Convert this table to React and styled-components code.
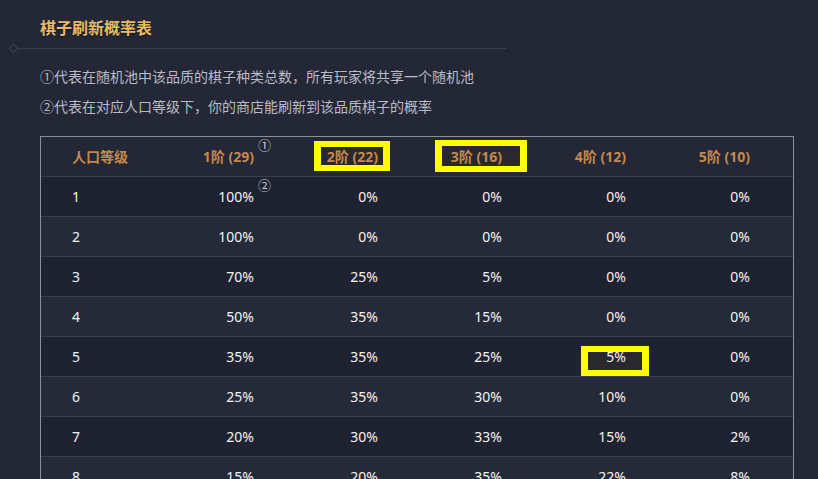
import React from "react";
import styled, { createGlobalStyle } from "styled-components";

const GlobalStyle = createGlobalStyle`
	body {
		margin: 0;
		background: #232736;
		font-family: "Noto Sans", "Noto Sans CJK SC", sans-serif;
	}
`;

const headers = [
	{ label: "1阶 (29)", sup: "①" },
	{ label: "2阶 (22)", mark: { l: -13, r: -12, t: -6, b: -5 } },
	{ label: "3阶 (16)", mark: { l: -16, r: -25, t: -7, b: -6 } },
	{ label: "4阶 (12)" },
	{ label: "5阶 (10)" },
];

const rows = [
	["1", "100%", "0%", "0%", "0%", "0%"],
	["2", "100%", "0%", "0%", "0%", "0%"],
	["3", "70%", "25%", "5%", "0%", "0%"],
	["4", "50%", "35%", "15%", "0%", "0%"],
	["5", "35%", "35%", "25%", "5%", "0%"],
	["6", "25%", "35%", "30%", "10%", "0%"],
	["7", "20%", "30%", "33%", "15%", "2%"],
	["8", "15%", "20%", "35%", "22%", "8%"],
];

function App() {
	return (
		<Page>
			<GlobalStyle />
			<Title>棋子刷新概率表</Title>
			<TitleLine>
				<Diamond />
			</TitleLine>
			<Notes>
				<p>①代表在随机池中该品质的棋子种类总数，所有玩家将共享一个随机池</p>
				<p>②代表在对应人口等级下，你的商店能刷新到该品质棋子的概率</p>
			</Notes>
			<Table>
				<HeadRow>
					<FirstCell head>人口等级</FirstCell>
					{headers.map((h) => (
						<Cell head key={h.label}>
							{h.mark ? (
								<Mark box={h.mark}>{h.label}</Mark>
							) : (
								<Tag>
									{h.label}
									{h.sup && <Sup>{h.sup}</Sup>}
								</Tag>
							)}
						</Cell>
					))}
				</HeadRow>
				{rows.map((r, i) => (
					<Row key={r[0]} dark={i % 2 === 0}>
						<FirstCell>{r[0]}</FirstCell>
						{r.slice(1).map((v, j) => (
							<Cell key={j}>
								{i === 0 && j === 0 ? (
									<Tag>
										{v}
										<Sup>②</Sup>
									</Tag>
								) : i === 4 && j === 3 ? (
									<Mark box={{ l: -25, r: -23, t: -1, b: -10 }}>{v}</Mark>
								) : (
									v
								)}
							</Cell>
						))}
					</Row>
				))}
			</Table>
		</Page>
	);
}

export default App;

const Page = styled.div`
	padding: 16px 25px 0 40px;
	height: 479px;
	box-sizing: border-box;
	overflow: hidden;
`;

const Title = styled.h2`
	margin: 0;
	font-size: 16px;
	line-height: 24px;
	font-weight: bold;
	color: #e6bb68;
	text-shadow: 0 1px 1px rgba(0, 0, 0, 0.5);
`;

const TitleLine = styled.div`
	position: relative;
	margin: 8px 0 0 -30px;
	width: 496px;
	height: 1px;
	background: #3a3f4f;
`;

const Diamond = styled.span`
	position: absolute;
	left: 0;
	top: -3px;
	width: 5px;
	height: 5px;
	border: 1px solid #3f4556;
	transform: rotate(45deg);
	background: #232736;
`;

const Notes = styled.div`
	margin-top: 13px;
	color: #b9bcc6;
	font-size: 14px;
	line-height: 30px;

	p {
		margin: 0;
	}
`;

const Table = styled.div`
	margin-top: 14px;
	width: 754px;
	border: 1px solid #8c909c;
	border-bottom: none;
	box-sizing: border-box;
`;

const HeadRow = styled.div`
	display: grid;
	grid-template-columns: 89px repeat(5, 124px);
	height: 40px;
	align-items: center;
	border-bottom: 1px solid #3a3f4d;
	box-sizing: border-box;
`;

const Row = styled(HeadRow)`
	background: ${(p) => (p.dark ? "#1f2230" : "#252a38")};
`;

const Cell = styled.div`
	text-align: right;
	font-size: 14px;
	line-height: 20px;
	color: ${(p) => (p.head ? "#c4894c" : "#f2f2f2")};
	font-weight: ${(p) => (p.head ? "bold" : "normal")};
`;

const FirstCell = styled(Cell)`
	text-align: left;
	padding-left: 31px;
`;

const Tag = styled.span`
	position: relative;
`;

const Sup = styled.span`
	position: absolute;
	left: 100%;
	top: -12px;
	margin-left: 4px;
	font-size: 13px;
	font-weight: normal;
	color: #c9ccd4;
`;

const Mark = styled.span`
	position: relative;
	z-index: 0;

	&::before {
		content: "";
		position: absolute;
		z-index: -1;
		left: ${(p) => p.box.l}px;
		right: ${(p) => p.box.r}px;
		top: ${(p) => p.box.t}px;
		bottom: ${(p) => p.box.b}px;
		border: 6px solid #ffff00;
		border-left-width: 7px;
		border-right-width: 7px;
		background: #28282d;
	}
`;
